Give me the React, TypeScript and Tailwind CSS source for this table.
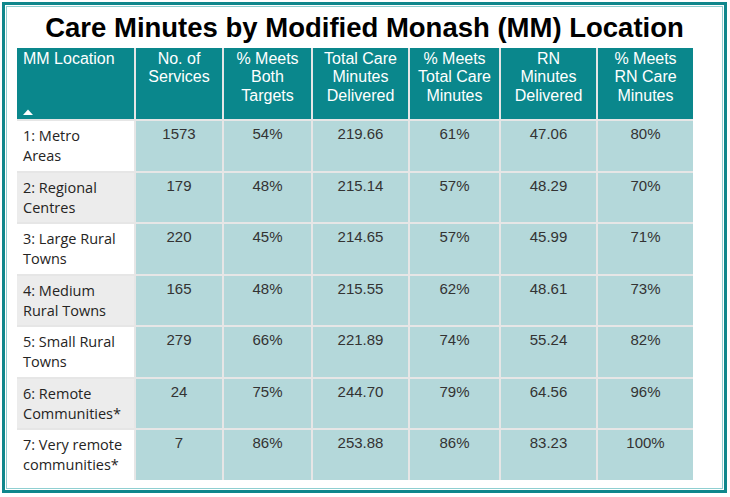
import React from "react";

const headers = [
  "No. of\nServices",
  "% Meets\nBoth\nTargets",
  "Total Care\nMinutes\nDelivered",
  "% Meets\nTotal Care\nMinutes",
  "RN\nMinutes\nDelivered",
  "% Meets\nRN Care\nMinutes",
];

const rows: [string, string, string[]][] = [
  ["1: Metro", "Areas", ["1573", "54%", "219.66", "61%", "47.06", "80%"]],
  ["2: Regional", "Centres", ["179", "48%", "215.14", "57%", "48.29", "70%"]],
  ["3: Large Rural", "Towns", ["220", "45%", "214.65", "57%", "45.99", "71%"]],
  ["4: Medium", "Rural Towns", ["165", "48%", "215.55", "62%", "48.61", "73%"]],
  ["5: Small Rural", "Towns", ["279", "66%", "221.89", "74%", "55.24", "82%"]],
  ["6: Remote", "Communities*", ["24", "75%", "244.70", "79%", "64.56", "96%"]],
  ["7: Very remote", "communities*", ["7", "86%", "253.88", "86%", "83.23", "100%"]],
];

export default function App() {
  return (
    <div className="w-[730px] h-[497px] bg-white relative overflow-hidden">
      <div className="absolute left-[2px] top-[2px] w-[725px] h-[491px] border-[3px] border-[#0f878c] bg-white">
        <div className="m-[1px] h-[calc(100%-2px)] border border-[#8fcfd1] flex flex-col">
          <div
            className="mt-[5px] h-[31px] leading-[31px] text-center text-[27.5px] font-bold text-black"
            style={{ fontFamily: '"Liberation Sans", Arial, sans-serif' }}
          >
            Care Minutes by Modified Monash (MM) Location
          </div>
          <div
            className="ml-[10px] mt-[5px] w-[676px] grid grid-cols-[117px_86px_87px_95px_89px_95px_95px] gap-[2px] bg-[#e6e6e6]"
            style={{ fontFamily: '"Liberation Sans", Arial, sans-serif' }}
          >
            <div className="h-[71px] bg-[#0a878c] text-white text-[16px] leading-[18.3px] pt-[2px] pl-[6px] flex flex-col justify-between">
              <span>MM Location</span>
              <svg width="10" height="6" viewBox="0 0 10 6" className="mb-[4px]">
                <polygon points="0,6 5,0.5 10,6" fill="white" />
              </svg>
            </div>
            {headers.map((h, i) => (
              <div
                key={i}
                className="h-[71px] bg-[#0a878c] text-white text-[16px] leading-[18.3px] pt-[2px] text-center whitespace-pre-line"
              >
                {h}
              </div>
            ))}
            {rows.map(([a, b, vals], ri) => (
              <React.Fragment key={ri}>
                <div
                  className={`h-[49.5px] pl-[6px] pt-[5px] text-[14.5px] leading-[20px] text-[#252423] ${
                    ri % 2 === 1 ? "bg-[#ececec]" : "bg-white"
                  }`}
                  style={{ fontFamily: '"Open Sans", "Noto Sans", sans-serif' }}
                >
                  <div>{a}</div>
                  <div>{b}</div>
                </div>
                {vals.map((v, vi) => (
                  <div
                    key={vi}
                    className="h-[49.5px] bg-[#b4d8da] text-[15px] leading-[18px] pt-[4px] text-center text-[#333333]"
                  >
                    {v}
                  </div>
                ))}
              </React.Fragment>
            ))}
          </div>
        </div>
      </div>
    </div>
  );
}
